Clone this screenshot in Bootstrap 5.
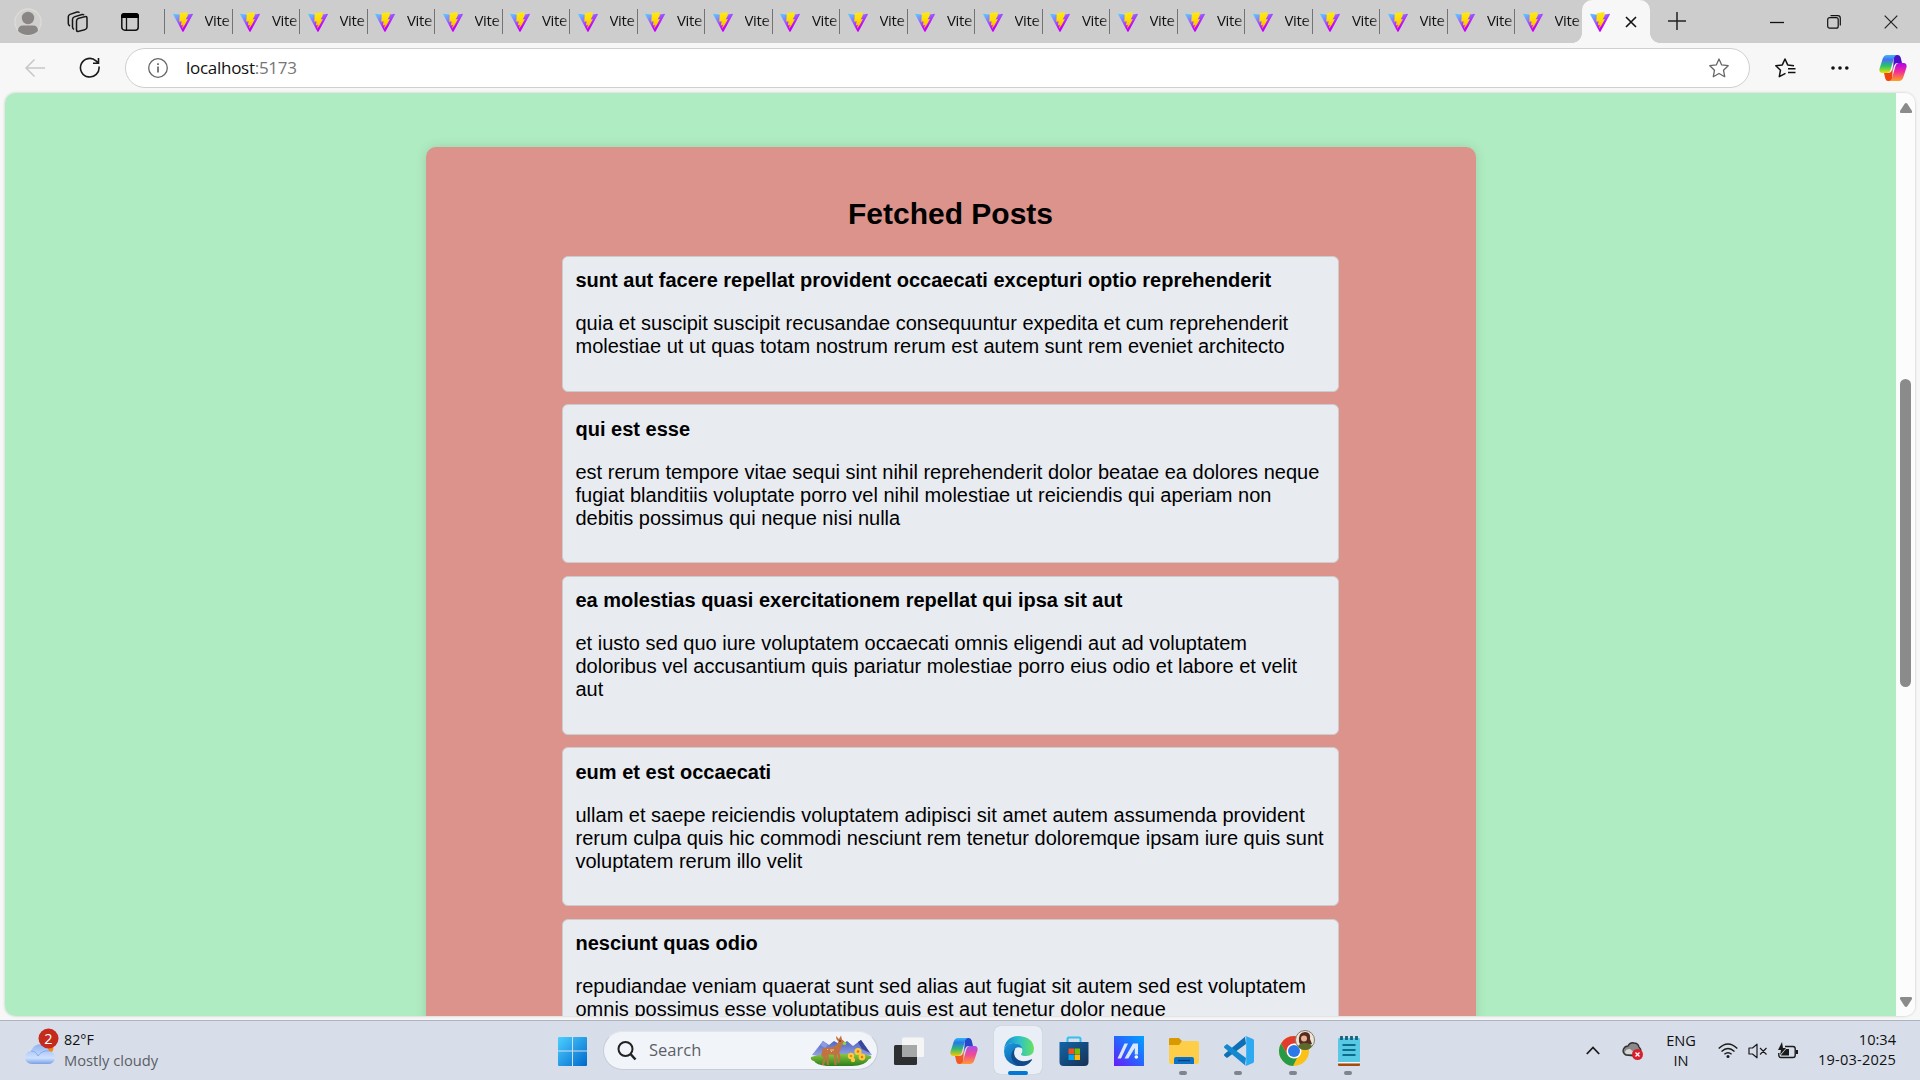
<!DOCTYPE html>
<html lang="en">
<head>
<meta charset="utf-8">
<title>Fetched Posts</title>
<link rel="stylesheet" href="https://cdn.jsdelivr.net/npm/bootstrap@5.3.0/dist/css/bootstrap.min.css">
<style>
body{width:1920px;height:1080px;overflow:hidden;background:#f7f7f7;color:#111;font-family:"Open Sans","Noto Sans",sans-serif;font-size:15px}
svg{display:block;flex:none}
.tabstrip{height:43px;background:#cdcdcd}
.strip-tools{width:164px;padding-left:14px}
.tab-item{width:67.5px;height:43px;padding-left:8.5px;position:relative;overflow:hidden;white-space:nowrap}
.tab-item::before{content:"";position:absolute;left:0;top:9px;width:1px;height:25px;background:#737373}
.tab-item .tab-label{margin-left:12px;margin-top:-2px;font-size:15px;letter-spacing:-.35px;width:26px;overflow:hidden;-webkit-mask-image:linear-gradient(90deg,#000 70%,#0007)}
.tab-open{width:68px;height:43px;background:#f7f7f7;border-radius:10px 10px 0 0;padding-left:8px;position:relative}
.tab-open::before,.tab-open::after{content:"";position:absolute;bottom:0;width:10px;height:10px}
.tab-open::before{left:-10px;background:radial-gradient(circle at 0 0,#cdcdcd 9.6px,#f7f7f7 10.2px)}
.tab-open::after{right:-10px;background:radial-gradient(circle at 100% 0,#cdcdcd 9.6px,#f7f7f7 10.2px)}
.toolbar{height:50px}
.addressbar{width:1625px;height:40px;border:1px solid #cfcfcf;border-radius:20px;background:#fff;font-size:17px;padding:0 20px 0 22px}
.address{margin-left:18px;margin-top:-1px;letter-spacing:-.28px}
.viewport{height:923px;margin:0 5px;width:1910px;border-radius:10px;overflow:hidden;box-shadow:0 0 3px #0003}
.page{background:#b0ecc1;width:1891px;padding:54px 0 0 421px;font-family:"Liberation Sans",Arial,sans-serif;color:#000}
.panel{width:1050px;height:1200px;background:#db938c;border-radius:10px;box-shadow:0 0 12px rgba(0,0,0,.12);padding:49px 137px 0 136px}
.panel h2{font-size:30px;font-weight:700;line-height:35px;margin:0 0 24.6px}
.post{background:#e8ecf1;border:1px solid #ccc;border-radius:6px;padding:12.5px;margin-bottom:12.5px;font-size:20px;line-height:23px;white-space:nowrap}
.post h3{font-size:20px;font-weight:700;line-height:23px;margin:0 0 20px}
.post p{margin:0 0 20px}
.scroller{width:19px;background:#fcfcfc;padding:10px 0 9px}
.thumb{width:11px;height:308px;border-radius:6px;background:#8b8b8b;margin-top:-44px}
.taskbar{height:60px;margin-top:3px;border-top:1px solid #adb4bf;background:#d8dee9}
.zone{height:59px}
.weather{width:557px;padding-left:24px;font-size:14.3px;line-height:20px}
.cloudy{color:#5a5e66;font-size:14.7px}
.searchbox{width:275px;height:39px;border-radius:20px;background:#f1f4f9;border:1px solid #c6ccd8;border-top-color:#e1e5ed;padding-left:13px;padding-right:5px;font-size:16.5px;color:#5c5f66;margin-left:15px}
.app{width:55px;height:59px;position:relative}
.app.run::after{content:"";position:absolute;bottom:5px;left:23px;width:8px;height:4px;border-radius:2px;background:#80848c}
.app.current::before{content:"";position:absolute;left:3px;top:5px;width:48px;height:48px;border-radius:6px;background:#eaeef6;box-shadow:0 0 1px #9aa}
.app.current::after{content:"";position:absolute;bottom:5px;left:17px;width:20px;height:4px;border-radius:2px;background:#0078d4}
.app svg{position:relative}
.clock{font-size:14.6px;line-height:20px}
</style>
<script src="https://cdn.jsdelivr.net/npm/bootstrap@5.3.0/dist/js/bootstrap.bundle.min.js"></script>
</head>
<body class="d-flex flex-column">
<svg width="0" height="0" class="position-absolute"><defs>
<linearGradient id="vg" x1="0" y1="0" x2=".55" y2=".75"><stop offset="0" stop-color="#4cd8ff"/><stop offset=".45" stop-color="#8a7cff"/><stop offset="1" stop-color="#c400ff"/></linearGradient>
<linearGradient id="vy" x1="0" y1="0" x2="0" y2="1"><stop offset="0" stop-color="#ffe81c"/><stop offset=".5" stop-color="#ffdc00"/><stop offset="1" stop-color="#ffa800"/></linearGradient>
<symbol id="vite" viewBox="0 0 20 20"><path d="M.2 2.400 9.400 19.500q.6.900 1.200 0L19.900 2.400q.2-.6-.5-.7L10.500 3.200.7 1.700Q0 1.800.2 2.400Z" fill="url(#vg)"/><path d="M14.300 0 6.800 1.300 6.300 9.700l2.300-.5-.7 4.200 1.900-.6-.9 4.200q3.200-3.800 6-9.900l-2.300.4 2.200-4Z" fill="url(#vy)"/></symbol>
<linearGradient id="ca" x1="0" y1="0" x2="0" y2="1"><stop offset="0" stop-color="#2cb8f5"/><stop offset=".25" stop-color="#2878e8"/><stop offset=".6" stop-color="#31b877"/><stop offset="1" stop-color="#f7c900"/></linearGradient>
<linearGradient id="cb" x1="0" y1="0" x2="0" y2="1"><stop offset="0" stop-color="#a94bee"/><stop offset=".5" stop-color="#f04b93"/><stop offset="1" stop-color="#ff9b35"/></linearGradient>
<linearGradient id="cc" x1="0" y1="0" x2="0" y2="1"><stop offset="0" stop-color="#35bdf8"/><stop offset=".25" stop-color="#4a6ef5"/><stop offset=".6" stop-color="#25c36c"/><stop offset="1" stop-color="#e6e300"/></linearGradient>
<linearGradient id="cd" x1="0" y1="0" x2="0" y2="1"><stop offset="0" stop-color="#b000f0"/><stop offset=".5" stop-color="#f42f96"/><stop offset="1" stop-color="#ffa21c"/></linearGradient>
</defs></svg>

<header class="tabstrip d-flex align-items-center">
<div class="strip-tools d-flex align-items-center flex-shrink-0">
<svg width="28" height="28" viewBox="0 0 28 28"><circle cx="14" cy="14" r="13" fill="#d1d0ce" stroke="#dddbd7" stroke-width="1.300"/><circle cx="14" cy="10" r="6.200" fill="#8a8684"/><path d="M4 23q0-5.500 5-5.500h10q5 0 5 5.500-4 4-10 4T4 23Z" fill="#8a8684"/></svg>
<svg class="ms-4" width="24" height="24" viewBox="0 0 24 24" fill="none" stroke="#161616" stroke-width="1.500"><rect x="10.500" y="7" width="10.500" height="13" rx="2.300" transform="skewY(-16) translate(0 5)"/><path d="M8 19.500q-1.500-1-1.500-2.500V9.500q0-2 1.800-2.600L16 4.500q1.500-.3 2 .8M4 16q-1.700-.9-1.700-2.500V6.800Q2.300 5 4 4.400L11 2q1.800-.4 2.500.6"/></svg>
<svg style="margin-left:30px" width="20" height="20" viewBox="0 0 20 20"><rect x="1.800" y="1.800" width="16.400" height="16.400" rx="3" fill="none" stroke="#111" stroke-width="1.500"/><path d="M1 6V4q0-3 3-3h12q3 0 3 3v2Z" fill="#000"/><path d="M6.500 6v12" stroke="#111" stroke-width="1.300"/></svg>
</div>
<nav id="tabs" class="d-flex flex-shrink-0"></nav>
<div class="tab-open d-flex align-items-center flex-shrink-0"><svg width="20" height="20"><use href="#vite"/></svg><svg style="margin-left:15px" width="12" height="12" viewBox="0 0 12 12" stroke="#111" stroke-width="1.600"><path d="m1 1 10 10M11 1 1 11"/></svg></div>
<svg style="margin-left:18px;margin-top:-2px" width="18" height="18" viewBox="0 0 18 18" stroke="#222" stroke-width="1.500"><path d="M9 0v18M0 9h18"/></svg>
<div class="d-flex align-items-center ms-auto" style="padding-right:22px;gap:43px">
<svg width="14" height="14" stroke="#111"><path d="M0 7.500h14" stroke-width="1.300"/></svg>
<svg width="14" height="14" viewBox="0 0 14 14" fill="none" stroke="#111" stroke-width="1.200"><rect x=".7" y="2.700" width="10.500" height="10.500" rx="2"/><path d="M3.500.7h7.300q2.500 0 2.500 2.500v7.300"/></svg>
<svg width="14" height="14" viewBox="0 0 14 14" stroke="#222" stroke-width="1.200"><path d="m.7.700 12.600 12.600M13.300.7.700 13.300"/></svg>
</div>
</header>

<div class="toolbar d-flex align-items-center">
<svg style="margin-left:25px" width="20" height="20" viewBox="0 0 20 20" fill="none" stroke="#c7c7c7" stroke-width="1.500"><path d="M9.500 1.500 1 10l8.500 8.500M1 10h19"/></svg>
<svg style="margin-left:34px" width="22" height="22" viewBox="0 0 22 22" fill="none" stroke="#1a1a1a" stroke-width="1.600"><path d="M20 9.500a9.300 9.300 0 1 1-3-5.700l2.300 2.200M19.500 1v5.300h-5.500"/></svg>
<div class="addressbar d-flex align-items-center" style="margin-left:24px"><svg width="20" height="20" viewBox="0 0 20 20" fill="none" stroke="#666" stroke-width="1.300"><circle cx="10" cy="10" r="9.300"/><path d="M10 8.500v6M10 5.200v1.800" stroke-width="1.700"/></svg><span class="address"><span>localhost</span><span style="color:#767676">:5173</span></span>
<svg class="ms-auto" width="20" height="20" viewBox="0 0 20 20" fill="none" stroke="#666" stroke-width="1.300" stroke-linejoin="round"><path d="m10 1 2.700 5.900 6.500.8-4.700 4.500 1.200 6.500L10 15.500l-5.700 3.200 1.200-6.500L.8 7.700l6.500-.8Z"/></svg></div>
<svg style="margin-left:25px" width="21" height="20" viewBox="0 0 21 20" fill="none" stroke="#111" stroke-width="1.500" stroke-linejoin="round"><path d="m10.500 15.300-6.200 3.400 1.200-6.500L.8 7.700l6.500-.8L10 1l2.700 5.900 6.300.8M13 10.800h7.500M13 14.500h7.500"/></svg>
<svg style="margin-left:35px" width="18" height="6" fill="#111"><circle cx="2" cy="3" r="1.800"/><circle cx="9" cy="3" r="1.800"/><circle cx="15.800" cy="3" r="1.800"/></svg>
<svg style="margin-left:30px" width="28" height="26" viewBox="0 0 28 26"><path d="M15 0h4q2 0 2.700 2.500L23 8h-5q-2 0-3 3l-1 4Z" fill="#4a12c8"/><path d="M13 26H9q-2 0-2.700-2.500L5 18h5q2 0 3-3l1-4Z" fill="#f0440e"/><path d="M8 0h10q-2 0-3 3l-3.500 12q-1 3-3.500 3H3.500Q0 18 .4 14L3.600 4Q4.800 0 8 0Z" fill="url(#cc)"/><path d="M20 26H10q2 0 3-3l3.500-12q1-3 3.500-3h4.500q3.500 0 3.100 4l-3.200 10q-1.200 4-4.400 4Z" fill="url(#cd)"/></svg>
</div>

<main class="viewport d-flex flex-shrink-0">
<div class="page flex-shrink-0"><section class="panel"><h2 class="text-center">Fetched Posts</h2>
<article class="post"><h3>sunt aut facere repellat provident occaecati excepturi optio reprehenderit</h3><p>quia et suscipit suscipit recusandae consequuntur expedita et cum reprehenderit<br>molestiae ut ut quas totam nostrum rerum est autem sunt rem eveniet architecto</p></article>
<article class="post"><h3>qui est esse</h3><p>est rerum tempore vitae sequi sint nihil reprehenderit dolor beatae ea dolores neque<br>fugiat blanditiis voluptate porro vel nihil molestiae ut reiciendis qui aperiam non<br>debitis possimus qui neque nisi nulla</p></article>
<article class="post"><h3>ea molestias quasi exercitationem repellat qui ipsa sit aut</h3><p>et iusto sed quo iure voluptatem occaecati omnis eligendi aut ad voluptatem<br>doloribus vel accusantium quis pariatur molestiae porro eius odio et labore et velit<br>aut</p></article>
<article class="post"><h3>eum et est occaecati</h3><p>ullam et saepe reiciendis voluptatem adipisci sit amet autem assumenda provident<br>rerum culpa quis hic commodi nesciunt rem tenetur doloremque ipsam iure quis sunt<br>voluptatem rerum illo velit</p></article>
<article class="post"><h3>nesciunt quas odio</h3><p>repudiandae veniam quaerat sunt sed alias aut fugiat sit autem sed est voluptatem<br>omnis possimus esse voluptatibus quis est aut tenetur dolor neque</p></article>
</section></div>
<aside class="scroller d-flex flex-column align-items-center justify-content-between flex-shrink-0"><svg width="12" height="10"><path d="M6 0q.8 0 1.500 1L12 8q.4 2-1.500 2h-9Q-.4 10 0 8l4.500-7Q5.200 0 6 0Z" fill="#8b8b8b"/></svg><div class="thumb"></div><svg width="12" height="10"><path d="M6 10q.8 0 1.500-1L12 2q.4-2-1.500-2h-9Q-.4 0 0 2l4.500 7Q5.200 10 6 10Z" fill="#8b8b8b"/></svg></aside>
</main>

<footer class="taskbar d-flex align-items-center flex-shrink-0 mt-auto">
<div class="weather d-flex align-items-center flex-shrink-0 zone">
<svg width="36" height="38" viewBox="0 0 36 38" style="margin-top:-7px"><defs><linearGradient id="cl" x1="0" y1="0" x2="0" y2="1"><stop offset="0" stop-color="#8fb2f0"/><stop offset=".7" stop-color="#cfe1ff"/><stop offset="1" stop-color="#789fe5"/></linearGradient></defs><circle cx="23" cy="20" r="6.500" fill="#f8821c"/><path d="M9 36q-7 0-8-6 0-6 6-7 3-7 10-7 6 0 8 7 6 1 6 7-1 6-7 6Z" fill="url(#cl)"/><path d="M7 23q5 0 7 5 4-6 11-5" fill="none" stroke="#86abea"/><circle cx="24.500" cy="10.500" r="10" fill="#c42b1c"/><text x="24.500" y="15.800" text-anchor="middle" font-size="14.500" fill="#fff">2</text></svg>
<div style="margin-left:4px;margin-top:-2px"><div>82°F</div><div class="cloudy">Mostly cloudy</div></div></div>
<svg style="margin-left:1px" width="30" height="30" viewBox="0 0 30 30"><defs><linearGradient id="wn" x1="0" y1="0" x2="1" y2="1"><stop offset="0" stop-color="#4cd0ff"/><stop offset="1" stop-color="#0068cc"/></linearGradient></defs><path d="M0 2q0-1 1-1h13v13.500H0ZM15 1h13q1 0 1 1v12.500H15ZM0 15.500h14V30H1q-1 0-1-1ZM15 15.500h14V29q0 1-1 1H15Z" fill="url(#wn)"/></svg>
<div class="searchbox d-flex align-items-center flex-shrink-0">
<svg width="20" height="20" viewBox="0 0 20 20" fill="none" stroke="#222" stroke-width="2"><circle cx="8.500" cy="8" r="7"/><path d="m13.500 13 5 5.500" stroke-width="2.500"/></svg><span style="margin-left:12px">Search</span>
<svg class="ms-auto" width="62" height="32" viewBox="0 0 62 32"><defs><linearGradient id="mt" x1="0" y1="0" x2="0" y2="1"><stop stop-color="#4f5fc0"/><stop offset="1" stop-color="#a3b6ea"/></linearGradient><linearGradient id="gr" x1="0" y1="0" x2="0" y2="1"><stop stop-color="#8cc63f"/><stop offset="1" stop-color="#2c7f1d"/></linearGradient></defs><path d="M2 20 13 6l6 4 5-4 7 4 6-4 6 5 8-6 11 15-30 5Z" fill="url(#mt)"/><path d="m48 7 3-2 9 13-8-4Z" fill="#39469c"/><path d="m10 10 3-4 5 4-3 3Z" fill="#8d9be0"/><path d="M1 22q14-4 30-3 20-1 30 2 1 3-2 3-4 7-17 7H17Q6 30 4 26q-4-1-3-4Z" fill="url(#gr)"/>
<g fill="#c27240"><path d="M12 14q3-2 8-1.500 4 0 6-2l2.500-4Q26 5 26 1l3 3 2-3.500 1 4q2 1 3.500 4l-4 1.500q0 5-3.500 8L26.500 20q-7-1-11 0l-2-1Z"/><path d="m12.500 15-1.300 5 2.500 3-1.700 7h2l2-7v-4ZM16 18l1 12h1.800l-.3-12ZM24 18l.5 12h1.800L27 18ZM27 18l1.500 5-1 5H29l1.500-5.500L29 16Z"/></g><circle cx="30" cy="6" r=".7" fill="#2b170d"/><path d="M20 15h4m-7-.5h1m3 2h1" stroke="#edc6a0"/><circle cx="34.500" cy="8.500" r="1.800" fill="#8bd33d"/>
<g fill="#ffc83d"><circle cx="41" cy="21" r="3.200"/><circle cx="48" cy="16.500" r="3.600"/><circle cx="52" cy="22" r="3.400"/><circle cx="43" cy="25" r="2.200"/></g><g fill="#e07c0e"><circle cx="41" cy="21" r="1.100"/><circle cx="48" cy="16.500" r="1.300"/><circle cx="52" cy="22" r="1.200"/></g></svg></div>
<div id="apps" class="d-flex flex-shrink-0" style="margin-left:3px">
<div class="app d-flex align-items-center justify-content-center"><svg width="30" height="28" viewBox="0 0 30 28"><rect y="8" width="23" height="20" rx="1.500" fill="#2e2f31"/><rect x="8" y=".5" width="22" height="19.500" rx="1.500" fill="#f5f5f5"/><path d="M8 8h15v12H8Z" fill="#a6a7a8"/></svg></div>
<div class="app d-flex align-items-center justify-content-center"><svg width="28" height="26" viewBox="0 0 28 26"><path d="M15 0h4q2 0 2.700 2.500L23 8h-5q-2 0-3 3l-1 4Z" fill="#2448c8"/><path d="M13 26H9q-2 0-2.700-2.500L5 18h5q2 0 3-3l1-4Z" fill="#f05a22"/><path d="M8 0h10q-2 0-3 3l-3.500 12q-1 3-3.500 3H3.500Q0 18 .4 14L3.600 4Q4.800 0 8 0Z" fill="url(#ca)"/><path d="M20 26H10q2 0 3-3l3.500-12q1-3 3.500-3h4.500q3.500 0 3.100 4l-3.200 10q-1.200 4-4.400 4Z" fill="url(#cb)"/></svg></div>
<div class="app current d-flex align-items-center justify-content-center"><svg width="30" height="30" viewBox="0 0 30 30"><defs><linearGradient id="eg" x1="0" y1=".5" x2="1" y2=".5"><stop offset="0" stop-color="#1686d5"/><stop offset=".5" stop-color="#2dc0cb"/><stop offset="1" stop-color="#68e35c"/></linearGradient><linearGradient id="eb" x1="0" y1="0" x2=".6" y2="1"><stop stop-color="#1b9de2"/><stop offset="1" stop-color="#0c59a4"/></linearGradient></defs><path d="M0 13Q2 0 15 0q14 1 15 12.500 0 7.500-8 7.500-5 0-5-2 2-2 1-5-3-7-10-6Q2 8 0 13Z" fill="url(#eg)"/><path d="M0 15Q1 7 9 7q7 0 9 5-8-3-8 5 0 9 10 12.200Q15 31 10 29 0 25 0 15Z" fill="url(#eb)"/><path d="M11 12.500Q8 20 14.500 24q6 3 13-.8 1-.3.500.8-4 6-10.500 6-8-1-10-8-1-6 3.500-9.500Z" fill="#114a8b"/></svg></div>
<div class="app d-flex align-items-center justify-content-center"><svg width="30" height="30" viewBox="0 0 30 30"><defs><linearGradient id="st" x1="0" y1="0" x2="1" y2="1"><stop stop-color="#1166a8"/><stop offset="1" stop-color="#183055"/></linearGradient></defs><path d="M8.500 8V3q0-1.500 1.500-1.500h10q1.500 0 1.500 1.500v5" fill="none" stroke="#32bff1" stroke-width="2"/><path d="M.5 6h29v20q0 4-4 4h-21q-4 0-4-4Z" fill="url(#st)"/><path d="M9.500 12.500H15V18H9.500Z" fill="#f25022"/><path d="M15.500 12.500H21V18h-5.500Z" fill="#7fba00"/><path d="M9.500 18.500H15V24H9.500Z" fill="#00a4ef"/><path d="M15.500 18.500H21V24h-5.500Z" fill="#ffb900"/></svg></div>
<div class="app d-flex align-items-center justify-content-center"><svg width="30" height="30" viewBox="0 0 30 30"><defs><linearGradient id="my" x1="0" y1="1" x2="1" y2="0"><stop stop-color="#6b19f8"/><stop offset=".5" stop-color="#2864ff"/><stop offset="1" stop-color="#00a5ff"/></linearGradient></defs><path d="M0 0h30v30H0Z" fill="url(#my)"/><path d="M3.500 22.500 10.500 7.500h3.500L7 22.500ZM10.500 22.500l8.500-15h5v11h-3.200V12l-6.500 10.500Z" fill="#d7e8ff"/><circle cx="22.300" cy="21" r="1.800" fill="#fff"/></svg></div>
<div class="app run d-flex align-items-center justify-content-center"><svg width="30" height="28" viewBox="0 0 30 28"><path d="M0 2q0-1 1-1h9l3 3-2 5H0Z" fill="#d99a00"/><path d="M0 8h10l3-4h15q2 0 2 2v19q0 2-2 2H2q-2 0-2-2Z" fill="#ffce48"/><path d="M5 27v-5q0-2 2-2h16q2 0 2 2v5Z" fill="#0b72c7"/><path d="M9 23.500h12" stroke="#053f7a" stroke-width="1.300"/></svg></div>
<div class="app run d-flex align-items-center justify-content-center"><svg width="30" height="30" viewBox="0 0 30 30"><path d="M22 8 3 22 .5 20q-1-1 0-2L21 .8Z" fill="#0b70b5"/><path d="M22 22 3 8 .5 10q-1 1 0 2L21 29.200Z" fill="#1388cf"/><path d="M21 .5Q22 0 23 .4l6 2.600q1 .5 1 2v20q0 1.500-1 2l-6 2.600q-1 .4-2-.5l1.200-1V1.500Z" fill="#2eaaf2"/></svg></div>
<div class="app run d-flex align-items-center justify-content-center"><svg width="38" height="36" viewBox="0 0 38 36" style="left:3px;top:-3px"><circle cx="16" cy="21" r="15" fill="#fbc116"/><path d="M3 13.500A15 15 0 0 1 29 13.500H16L9.500 25Z" fill="#e33b2e"/><path d="M3 13.500 9.500 25q3 4 9.500 3l-4 8A15 15 0 0 1 3 13.500Z" fill="#259b48"/><circle cx="16" cy="21" r="7.500" fill="#fff"/><circle cx="16" cy="21" r="6" fill="#2d78e8"/><circle cx="27" cy="10" r="9.500" fill="#eee5d6" stroke="#807d6d"/><path d="M21 12Q20 2 27 2q6 0 5 7l2 5q-5 2-12 0Z" fill="#572b22"/><circle cx="26" cy="8.500" r="3" fill="#e9b293"/><path d="M20 16q2-3 7-3t7 3q-2 4-7 4t-7-4Z" fill="#5c6b2b"/></svg></div>
<div class="app run d-flex align-items-center justify-content-center"><svg width="22" height="30" viewBox="0 0 22 30"><path d="M0 3q0-1 1-1h20q1 0 1 1v23H0Z" fill="#57c9e4"/><path d="M0 26h22v1.500H0Z" fill="#f5f5f5"/><path d="M0 27.500h22V29q0 1-1 1H1q-1 0-1-1Z" fill="#a84a0b"/><path d="M4.500 9h13M4.500 14h13M4.500 19h13" stroke="#0d6c89" stroke-width="1.800"/><path d="M3.500 0v4M8.500 0v4M13.500 0v4M18.500 0v4" stroke="#16617c" stroke-width="2.800"/></svg></div>
</div>
<div class="d-flex align-items-center ms-auto flex-shrink-0" style="padding-right:24px">
<svg width="14" height="9" viewBox="0 0 14 9" fill="none" stroke="#1a1a1a" stroke-width="1.800"><path d="m.8 8 6.200-6.500L13.200 8"/></svg>
<svg style="margin-left:22px" width="22" height="20" viewBox="0 0 22 20"><path d="M4 14Q0 12 1.500 8 3 5 6 5q2-4 6-3 4 0 5 4 3 3 1 7-1 2-4 2Z" fill="#8a8a8a" stroke="#333" stroke-width="1.400"/><path d="M3 12q0-4 5-4l6 5H5Z" fill="#d8d8d8"/><circle cx="15.500" cy="13.500" r="5.500" fill="#d91f2d"/><path d="m13.500 11.500 4 4m0-4-4 4" stroke="#fff" stroke-width="1.300"/></svg>
<div class="text-center clock" style="margin-left:22px;width:30px;margin-top:-2px">ENG<br>IN</div>
<svg style="margin-left:22px" width="20" height="16" viewBox="0 0 20 16" fill="none" stroke="#1a1a1a" stroke-width="1.400"><path d="M.7 5.500q9.300-9 18.600 0M3.500 8.500q6.500-6 13 0M6.400 11.300q3.600-3.200 7.200 0"/><circle cx="10" cy="13.500" r="1.500" fill="#1a1a1a" stroke="none"/></svg>
<svg style="margin-left:10px" width="20" height="16" viewBox="0 0 20 16" fill="none" stroke="#1a1a1a" stroke-width="1.200" stroke-linejoin="round"><path d="M1 5h3.500L9 1.200v13.600L4.500 11H1ZM12 5l6.500 6.500M18.500 5 12 11.500"/></svg>
<svg style="margin-left:10px" width="20" height="17" viewBox="0 0 20 17"><path d="M7 4.500h8q2.200 0 2.200 2.200v6.600q0 2.200-2.200 2.200H3q-2.200 0-2.200-2.200V11" fill="none" stroke="#1a1a1a" stroke-width="1.400"/><path d="M18 8h2v4h-2ZM3 13l5-6h3v6.500H3ZM4 0 0 8h3l-1 5 6-7H5Z" fill="#1a1a1a"/></svg>
<div class="text-end clock" style="margin-left:20px;width:78px;margin-top:-4px;white-space:nowrap"><div>10:34</div><div style="letter-spacing:.2px">19-03-2025</div></div>
</div>
</footer>
<script>
document.getElementById('tabs').innerHTML = Array.from({length:21}, () => '<div class="tab-item d-flex align-items-center"><svg width="20" height="20"><use href="#vite"/></svg><span class="tab-label">Vite</span></div>').join('');
</script>
</body>
</html>
